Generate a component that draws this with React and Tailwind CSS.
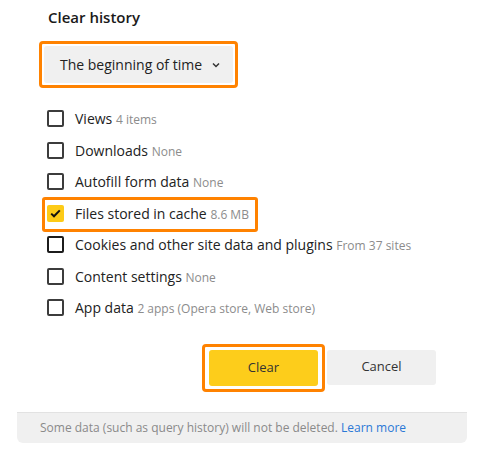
import React from "react";

const rows = [
  { label: "Views", note: "4 items" },
  { label: "Downloads", note: "None" },
  { label: "Autofill form data", note: "None" },
  { label: "Files stored in cache", note: "8.6 MB", checked: true, mark: true },
  { label: "Cookies and other site data and plugins", note: "From 37 sites", dark: true },
  { label: "Content settings", note: "None" },
  { label: "App data", note: "2 apps (Opera store, Web store)" },
];

const Checkbox = ({ checked, dark }) =>
  checked ? (
    <span className="flex h-[17px] w-[17px] items-center justify-center rounded-[2px] bg-[#fdcb17]">
      <svg width="11" height="9" viewBox="0 0 11 9" fill="none">
        <path d="M1.2 4.6 L4 7.3 L9.8 1.4" stroke="#111" strokeWidth="2" />
      </svg>
    </span>
  ) : (
    <span
      className={`h-[17px] w-[17px] rounded-[2px] border-2 ${
        dark ? "border-[#1c1c1c]" : "border-[#3c3c3c]"
      }`}
    />
  );

const App = () => {
  return (
    <div
      className="h-[460px] w-[486px] bg-white"
      style={{ fontFamily: "'Open Sans', 'Noto Sans', sans-serif" }}
    >
      <div className="ml-[17px] w-[450px] pt-[7px]">
        <div className="pl-[31px] text-[15px] font-semibold leading-[20px] text-[#1a1a1a]">
          Clear history
        </div>

        {/* period select */}
        <div className="ml-[22px] mt-[14px] w-[199px] rounded-[4px] border-[3px] border-[#ff8200] p-[2px]">
          <div className="flex h-[37px] items-center rounded-[3px] bg-[#f0f0f0] pl-[16px] text-[14px] text-[#222]">
            <span>The beginning of time</span>
            <svg className="ml-[10px]" width="8" height="6" viewBox="0 0 8 6" fill="none">
              <path d="M1 1.5 L4 4.5 L7 1.5" stroke="#333" strokeWidth="1.5" />
            </svg>
          </div>
        </div>

        {/* checkbox rows */}
        <div className="mt-[15px] flex flex-col pl-[30px]">
          {rows.map((r) => (
            <div key={r.label} className="relative flex h-[31.5px] items-center gap-[11px]">
              {r.mark && (
                <span className="absolute left-[-5px] top-[-1px] h-[35px] w-[216px] rounded-[3px] border-[3px] border-[#ff8200]" />
              )}
              <Checkbox checked={r.checked} dark={r.dark} />
              <span className="text-[14px] text-[#222]">
                {r.label}{" "}
                <span className="text-[12px] text-[#8c8c8c]">{r.note}</span>
              </span>
            </div>
          ))}
        </div>

        {/* buttons */}
        <div className="mt-[26px] flex justify-end gap-[9px] pr-[31px]">
          <div className="relative">
            <span className="absolute left-[-7px] top-[-6px] h-[48px] w-[123px] rounded-[4px] border-[3px] border-[#ff8200]" />
            <button className="relative h-[36px] w-[109px] rounded-[3px] bg-[#fdcd1b] text-[13px] text-[#333]">
              Clear
            </button>
          </div>
          <button className="h-[35px] w-[109px] rounded-[3px] bg-[#f0f0f0] text-[13px] text-[#333]">
            Cancel
          </button>
        </div>

        {/* footer */}
        <div className="mt-[26px] flex h-[31px] items-center rounded-b-[6px] border-t border-[#e2e2e2] bg-[#f0f0f0] pl-[23px] text-[12px] text-[#8a8a8a]">
          <span>
            Some data (such as query history) will not be deleted.{" "}
            <span className="text-[#2a78d6]">Learn more</span>
          </span>
        </div>
      </div>
    </div>
  );
};

export default App;
